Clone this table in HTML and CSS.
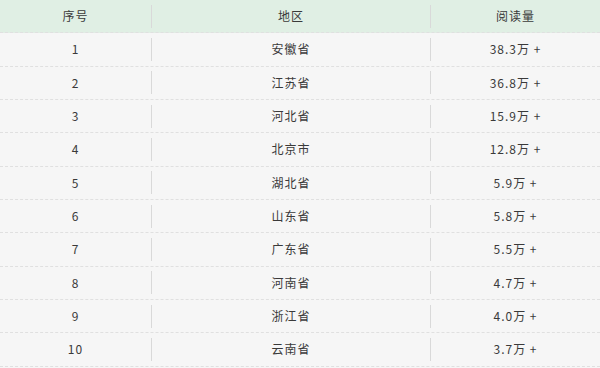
FILE: index.html
```html
<!DOCTYPE html>
<html lang="zh-CN">
  <head>
    <meta charset="UTF-8" />
    <meta name="viewport" content="width=device-width, initial-scale=1.0" />
    <title>阅读量排行</title>
    <link rel="stylesheet" href="styles.css">
  </head>
  <body>
    <div class="rank-table">
      <div class="row head">
        <div class="cell">序号</div>
        <div class="cell"><span class="sep">地区</span></div>
        <div class="cell"><span class="sep">阅读量</span></div>
      </div>
      <div class="row">
        <div class="cell">1</div>
        <div class="cell"><span class="sep">安徽省</span></div>
        <div class="cell"><span class="sep">38.3万 +</span></div>
      </div>
      <div class="row">
        <div class="cell">2</div>
        <div class="cell"><span class="sep">江苏省</span></div>
        <div class="cell"><span class="sep">36.8万 +</span></div>
      </div>
      <div class="row">
        <div class="cell">3</div>
        <div class="cell"><span class="sep">河北省</span></div>
        <div class="cell"><span class="sep">15.9万 +</span></div>
      </div>
      <div class="row">
        <div class="cell">4</div>
        <div class="cell"><span class="sep">北京市</span></div>
        <div class="cell"><span class="sep">12.8万 +</span></div>
      </div>
      <div class="row">
        <div class="cell">5</div>
        <div class="cell"><span class="sep">湖北省</span></div>
        <div class="cell"><span class="sep">5.9万 +</span></div>
      </div>
      <div class="row">
        <div class="cell">6</div>
        <div class="cell"><span class="sep">山东省</span></div>
        <div class="cell"><span class="sep">5.8万 +</span></div>
      </div>
      <div class="row">
        <div class="cell">7</div>
        <div class="cell"><span class="sep">广东省</span></div>
        <div class="cell"><span class="sep">5.5万 +</span></div>
      </div>
      <div class="row">
        <div class="cell">8</div>
        <div class="cell"><span class="sep">河南省</span></div>
        <div class="cell"><span class="sep">4.7万 +</span></div>
      </div>
      <div class="row">
        <div class="cell">9</div>
        <div class="cell"><span class="sep">浙江省</span></div>
        <div class="cell"><span class="sep">4.0万 +</span></div>
      </div>
      <div class="row">
        <div class="cell">10</div>
        <div class="cell"><span class="sep">云南省</span></div>
        <div class="cell"><span class="sep">3.7万 +</span></div>
      </div>
    </div>
  </body>
</html>
```

FILE: styles.css
```css
* {
  margin: 0;
  padding: 0;
  box-sizing: border-box;
}
body {
  font-family: "Noto Sans CJK SC", "Noto Sans", sans-serif;
  background-color: #f6f6f6;
  color: #3a3a3a;
  width: 600px;
  height: 368px;
  overflow: hidden;
}

.rank-table {
  width: 600px;
}

.row {
  display: grid;
  grid-template-columns: 151px 279px 1fr;
  height: 33.33px;
  border-bottom: 1px dashed #e0e0e0;
  background-color: #f6f6f6;
}

.row.head {
  background-color: #e0efe4;
}

.cell {
  display: flex;
  align-items: center;
  justify-content: center;
  font-size: 12px;
  letter-spacing: 1px;
  line-height: 1;
  white-space: pre;
}

.sep {
  display: flex;
  align-items: center;
  justify-content: center;
  width: 100%;
  height: 23px;
  border-left: 1px solid #d9d9d9;
}
```
